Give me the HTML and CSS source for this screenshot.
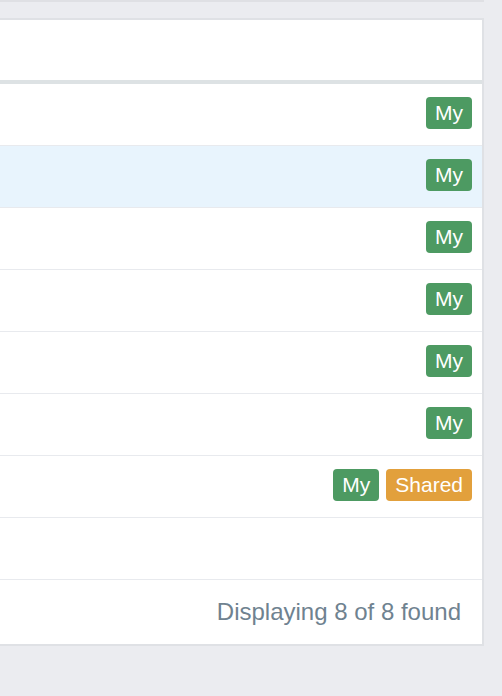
FILE: index.html
```html
<!DOCTYPE html>
<html>
<head>
<meta charset="utf-8">
<link rel="stylesheet" href="styles.css">
</head>
<body>
<div class="prev"></div>
<div class="card">
  <div class="card-head"></div>
  <div class="rows">
    <div class="row"><span class="badge my">My</span></div>
    <div class="row row-active"><span class="badge my">My</span></div>
    <div class="row"><span class="badge my">My</span></div>
    <div class="row"><span class="badge my">My</span></div>
    <div class="row"><span class="badge my">My</span></div>
    <div class="row"><span class="badge my">My</span></div>
    <div class="row"><span class="badge my">My</span><span class="badge shared">Shared</span></div>
    <div class="row"></div>
  </div>
  <div class="card-foot">Displaying 8 of 8 found</div>
</div>
</body>
</html>
```
FILE: styles.css
```css
html, body {
  margin: 0;
  padding: 0;
}
body {
  background: #ebecf0;
  font-family: "Liberation Sans", Arial, sans-serif;
  overflow: hidden;
}
.prev {
  height: 2px;
  background: #dfe0e4;
  margin-right: 18px;
}
.card {
  margin: 16px 18px 0 -10px;
  background: #ffffff;
  border: 2px solid #dfe1e5;
}
.card-head {
  height: 60px;
  border-bottom: 4px solid #dde2e4;
}
.row {
  box-sizing: border-box;
  height: 62px;
  border-bottom: 1px solid #e8eaee;
  display: flex;
  justify-content: flex-end;
  align-items: center;
  gap: 7px;
  padding: 0 10px 4px 0;
}
.row-active {
  background: #e8f4fd;
}
.badge {
  display: inline-block;
  height: 32px;
  line-height: 32px;
  padding: 0 9px;
  border-radius: 4px;
  color: #ffffff;
  font-size: 21px;
}
.my {
  background: #4d9a62;
}
.shared {
  background: #e2a03c;
}
.card-foot {
  height: 64px;
  display: flex;
  align-items: center;
  justify-content: flex-end;
  padding-right: 21px;
  color: #6f8290;
  font-size: 24px;
}
```
